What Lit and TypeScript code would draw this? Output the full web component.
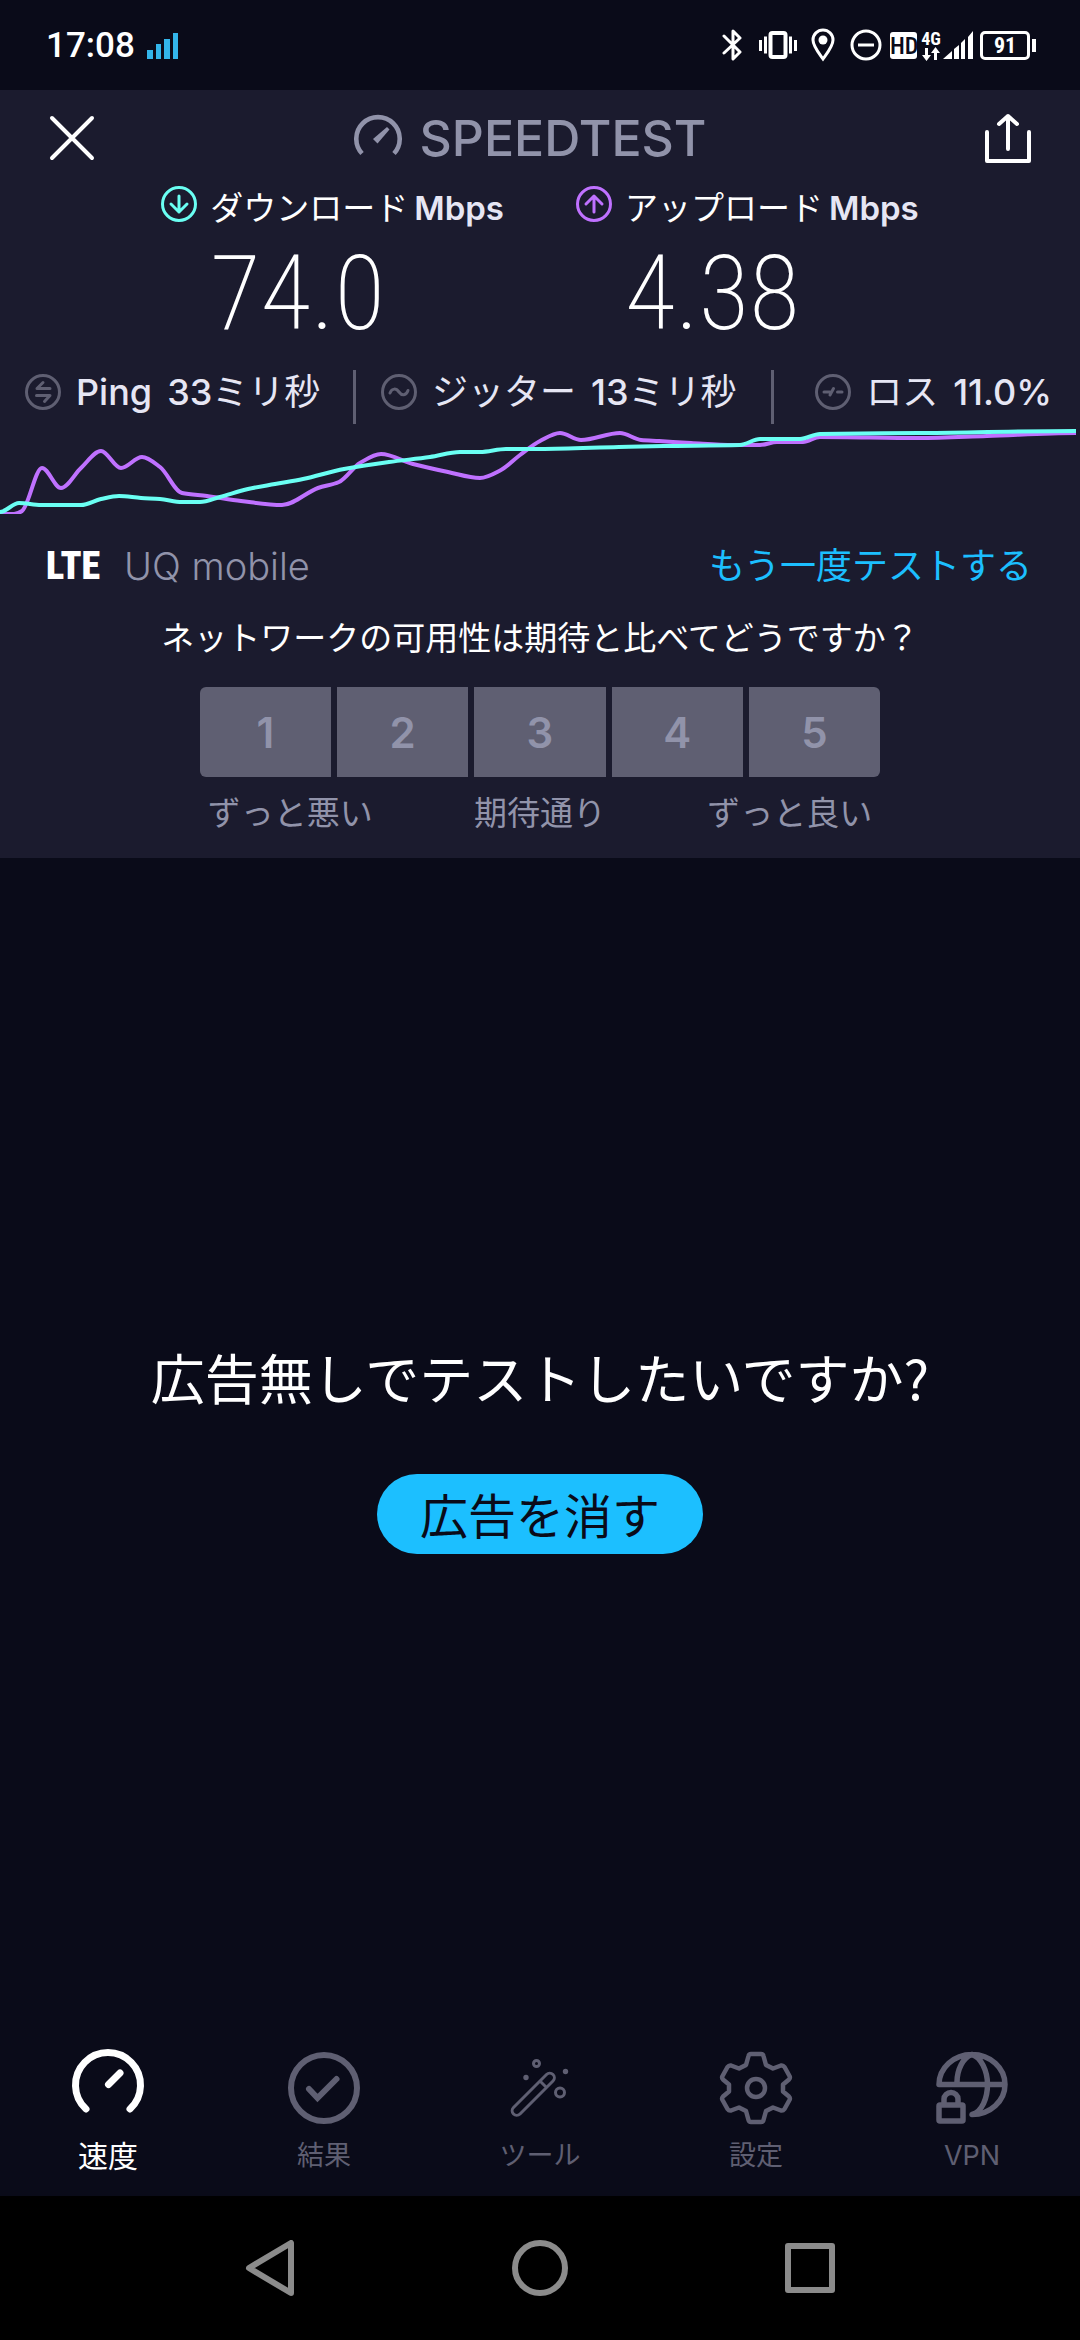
import { LitElement, html, svg, css } from "lit";
import { customElement, property, state } from "lit/decorators.js";
import { classMap } from "lit/directives/class-map.js";

type Point = [number, number];

const downloadSeries: Point[] = [
  [0, 88], [19, 79], [41, 81], [81, 81], [101, 75], [119, 72], [141, 74], [160, 75], [182, 78],
  [200, 78], [220, 73], [248, 65], [275, 60], [303, 55], [344, 45], [389, 38], [430, 33], [460, 28],
  [480, 28], [506, 25], [540, 25], [619, 23], [664, 22], [740, 21], [760, 15], [800, 15], [820, 10],
  [919, 9], [1076, 7],
];

const uploadSeries: Point[] = [
  [0, 90], [14, 90], [22, 87], [42, 44], [61, 64], [81, 44], [101, 27], [121, 44], [142, 33],
  [160, 43], [182, 69], [207, 72], [241, 77], [282, 81], [318, 64], [339, 58], [360, 39], [381, 30],
  [413, 40], [448, 48], [480, 54], [501, 46], [520, 31], [540, 17], [560, 9], [581, 16], [620, 9],
  [641, 16], [659, 17], [691, 19], [733, 21], [760, 21], [777, 18], [803, 18], [820, 13], [919, 14],
  [987, 12], [1076, 9],
];

/** Smooth cubic path through the samples that never overshoots a peak. */
function smoothPath(points: Point[]): string {
  const slopes = points.map((p, i) => {
    if (i === 0 || i === points.length - 1) return 0;
    const [ax, ay] = points[i - 1];
    const [bx, by] = points[i + 1];
    const before = (p[1] - ay) / (p[0] - ax);
    const after = (by - p[1]) / (bx - p[0]);
    return before * after <= 0 ? 0 : (2 * before * after) / (before + after);
  });
  let d = `M${points[0][0]} ${points[0][1]}`;
  for (let i = 1; i < points.length; i++) {
    const [x0, y0] = points[i - 1];
    const [x1, y1] = points[i];
    const h = (x1 - x0) / 3;
    d += ` C${x0 + h} ${y0 + slopes[i - 1] * h} ${x1 - h} ${y1 - slopes[i] * h} ${x1} ${y1}`;
  }
  return d;
}

const latin = css`"Inter", "Noto Sans CJK JP", "Liberation Sans", sans-serif`;
const narrow = css`"Roboto Condensed", "Roboto", "Liberation Sans", sans-serif`;

/* ---------- status bar ---------- */

@customElement("status-bar")
export class StatusBar extends LitElement {
  static styles = css`
    :host {
      display: flex;
      align-items: center;
      justify-content: space-between;
      height: 90px;
      padding: 0 44px 0 46px;
      color: #fff;
      font-family: "Roboto", "Liberation Sans", sans-serif;
    }
    .left { display: flex; align-items: center; gap: 12px; padding-top: 2px; }
    .time { font-size: 35px; line-height: 48px; font-weight: 500; }
    .right { display: flex; align-items: center; }
    .right svg { display: block; }
    .bt { margin-right: 16px; }
    .vib { margin-right: 12px; }
    .pin { margin-right: 14px; }
    .dnd { margin-right: 8px; }
    .hd {
      width: 27px;
      height: 27px;
      margin-right: 4px;
      border-radius: 3px;
      background: #fff;
      color: #0a0b19;
      font-family: ${narrow};
      font-size: 24px;
      line-height: 28px;
      font-weight: 500;
      text-align: center;
    }
    .net { display: flex; flex-direction: column; align-items: center; width: 20px; margin-right: 2px; }
    .gen { font-family: ${narrow}; font-size: 18px; line-height: 17px; font-weight: 700; }
    .sig { margin-right: 6px; }
    .battery {
      box-sizing: border-box;
      width: 50px;
      height: 29px;
      border: 3px solid #fff;
      border-radius: 5px;
      font-family: ${narrow};
      font-size: 22px;
      line-height: 24px;
      font-weight: 700;
      text-align: center;
    }
    .nub { width: 4px; height: 13px; margin-left: 2px; background: #fff; }
  `;

  render() {
    return html`
      <div class="left">
        <span class="time">17:08</span>
        <svg width="32" height="28" viewBox="0 0 32 28" fill="#33b5ea" aria-hidden="true">
          <path d="M0 18h6v9H0zM9 12h5v15H9zM17 7h6v20h-6zM26 1h5v26h-5z" />
        </svg>
      </div>
      <div class="right">
        <svg class="bt" width="20" height="32" viewBox="0 0 20 32" fill="none" stroke="#fff" stroke-width="3" stroke-linejoin="round" stroke-linecap="round" aria-hidden="true">
          <path d="M2 7 18 23 11 30V2l7 7L2 24" />
        </svg>
        <svg class="vib" width="40" height="28" viewBox="0 0 40 28" fill="none" stroke="#fff" stroke-width="3" aria-hidden="true">
          <rect x="12.5" y="2" width="15" height="24" rx="2" stroke-width="4" />
          <path d="M2.5 9v11M7.5 5.5v17M32.5 5.5v17M37.5 9v11" />
        </svg>
        <svg class="pin" width="26" height="34" viewBox="0 0 26 34" fill="none" stroke="#fff" stroke-width="3" aria-hidden="true">
          <path d="M13 31C8 24 3 18 3 12a10 10 0 0 1 20 0c0 6-5 12-10 19z" />
          <circle cx="13" cy="12" r="4.5" fill="#fff" stroke="none" />
        </svg>
        <svg class="dnd" width="32" height="32" viewBox="0 0 32 32" fill="none" stroke="#fff" stroke-width="3" aria-hidden="true">
          <circle cx="16" cy="16" r="14" /><path d="M8 16h16" />
        </svg>
        <span class="hd">HD</span>
        <span class="net">
          <span class="gen">4G</span>
          <svg width="18" height="14" viewBox="0 0 18 14" fill="#fff" aria-hidden="true">
            <path d="M3 1h3v7h3l-4.5 6L0 8h3zM12 13h3V6h3l-4.5-6L9 6h3z" />
          </svg>
        </span>
        <svg class="sig" width="31" height="28" viewBox="0 0 31 28" fill="#fff" aria-hidden="true">
          <path d="M0 28 9 20v8zM11 28V18l5-4v14zM18 28V12l4-4v20zM25 28V6l5-6v28z" />
        </svg>
        <span class="battery">91</span><span class="nub"></span>
      </div>
    `;
  }
}

/* ---------- result panel ---------- */

@customElement("result-panel")
export class ResultPanel extends LitElement {
  @state() private rating = 0;

  static styles = css`
    :host {
      display: flex;
      flex-direction: column;
      padding-bottom: 21px;
      background: #1b1b2e;
      color: #fff;
      font-family: ${latin};
    }
    svg { display: block; flex: none; }
    button { padding: 0; border: 0; background: none; color: inherit; font: inherit; cursor: pointer; }
    .bar { display: flex; align-items: center; justify-content: space-between; height: 96px; padding: 0 48px; }
    .brand { display: flex; align-items: center; gap: 18px; margin: 0; padding-right: 20px; color: #9193aa; font-size: 50px; line-height: 56px; font-weight: 500; }

    .speeds { display: flex; justify-content: center; gap: 72px; }
    .speed { display: grid; grid-template-columns: 36px auto; column-gap: 13px; align-items: start; }
    .name { display: flex; align-items: center; gap: 6px; padding-top: 4px; font-size: 33px; line-height: 36px; white-space: nowrap; }
    .unit { color: #e6e6f4; font-weight: 600; }
    .value { grid-column: 2; font-family: ${narrow}; font-size: 104px; line-height: 136px; font-weight: 200; }

    .metrics { display: grid; grid-template-columns: 353fr 418fr 309fr; margin-top: 8px; color: #e6e6f4; }
    .metric { display: flex; align-items: flex-start; gap: 15px; height: 50px; padding: 4px 0 0 25px; font-size: 36px; line-height: 36px; white-space: nowrap; }
    .metric + .metric { border-left: 3px solid #5f5f72; }
    .metric:last-child { justify-content: flex-end; padding-right: 28px; }
    .strong { font-weight: 500; }
    .chart { width: 100%; height: 90px; }

    .network { display: flex; align-items: center; gap: 24px; margin-top: 28px; padding: 0 48px 0 46px; line-height: 48px; }
    .tech { font-family: ${narrow}; font-size: 38px; font-weight: 900; }
    .carrier { flex: 1; color: #9193aa; font-size: 38px; font-weight: 300; }
    .again { color: #1cbfff; font-size: 36px; text-decoration: none; }

    .survey { display: flex; flex-direction: column; align-items: center; margin-top: 24px; font-size: 33px; line-height: 48px; }
    .question { margin: 0; font-size: 33px; font-weight: 400; }
    .scale { display: grid; grid-template-columns: repeat(5, 1fr); gap: 6px; width: 63%; margin-top: 25px; }
    .score { height: 90px; padding-top: 2px; background: #5f5f72; color: #9193aa; font-size: 42px; font-weight: 600; }
    .score:first-child { border-radius: 6px 0 0 6px; }
    .score:last-child { border-radius: 0 6px 6px 0; }
    .score.chosen { background: #1cbfff; color: #0a0b19; }
    .legend { display: flex; justify-content: space-between; box-sizing: border-box; width: 63%; margin-top: 12px; padding: 0 8px; color: #9193aa; }
  `;

  render() {
    return html`
      <header class="bar">
        <button aria-label="閉じる">
          <svg width="48" height="48" viewBox="0 0 48 48" fill="none" stroke="#fff" stroke-width="4" stroke-linecap="round">
            <path d="M4 4 44 44M44 4 4 44" />
          </svg>
        </button>
        <h1 class="brand">
          <svg width="48" height="48" viewBox="0 0 48 48" aria-hidden="true">
            <path d="M8 39.5a21.7 21.7 0 1 1 32 0" fill="none" stroke="#9193aa" stroke-width="4.6" />
            <path d="M33 13 35.5 15.5 23.5 29.5 19 25z" fill="#9193aa" />
          </svg>
          SPEEDTEST
        </h1>
        <button aria-label="共有">
          <svg width="48" height="50" viewBox="0 0 48 50" fill="none" stroke="#fff" stroke-width="4" stroke-linecap="round" stroke-linejoin="round">
            <path d="M3 19V48H45V19M24 36V3M15 11 24 3 33 11" />
          </svg>
        </button>
      </header>

      <section class="speeds">
        <div class="speed">
          <svg width="36" height="36" viewBox="0 0 36 36" fill="none" stroke="#6afff3" stroke-width="3" stroke-linecap="round" stroke-linejoin="round" aria-hidden="true">
            <circle cx="18" cy="18" r="16.5" /><path d="M18 10V26M10 18 18 26 26 18" />
          </svg>
          <span class="name">ダウンロード<span class="unit">Mbps</span></span>
          <span class="value">74.0</span>
        </div>
        <div class="speed">
          <svg width="36" height="36" viewBox="0 0 36 36" fill="none" stroke="#bf71ff" stroke-width="3" stroke-linecap="round" stroke-linejoin="round" aria-hidden="true">
            <circle cx="18" cy="18" r="16.5" /><path d="M18 26V10M10 18 18 10 26 18" />
          </svg>
          <span class="name">アップロード<span class="unit">Mbps</span></span>
          <span class="value">4.38</span>
        </div>
      </section>

      <section class="metrics">
        <div class="metric">
          <svg width="36" height="36" viewBox="0 0 36 36" fill="none" stroke="#5f5f72" stroke-width="3" stroke-linecap="round" stroke-linejoin="round" aria-hidden="true">
            <circle cx="18" cy="18" r="16.5" /><path d="M25 14.5H12L18 8.5M11.5 21.5H25L19.5 27.5" />
          </svg>
          <span class="strong">Ping</span>
          <span><span class="strong">33</span>ミリ秒</span>
        </div>
        <div class="metric">
          <svg width="36" height="36" viewBox="0 0 36 36" fill="none" stroke="#5f5f72" stroke-width="3" stroke-linecap="round" aria-hidden="true">
            <circle cx="18" cy="18" r="16.5" /><path d="M9 19C11 14 15 14 18 18S25 22 27 16.5" />
          </svg>
          <span>ジッター</span>
          <span><span class="strong">13</span>ミリ秒</span>
        </div>
        <div class="metric">
          <svg width="36" height="36" viewBox="0 0 36 36" fill="none" stroke="#5f5f72" stroke-width="3" stroke-linecap="round" aria-hidden="true">
            <circle cx="18" cy="18" r="16.5" /><path d="M9 18H15M18.5 14.5 15 21M22.5 18H27" />
          </svg>
          <span>ロス</span>
          <span class="strong">11.0%</span>
        </div>
      </section>

      <svg class="chart" viewBox="0 0 1080 90" preserveAspectRatio="none" fill="none" stroke-width="4" role="img" aria-label="速度グラフ">
        ${svg`<path d=${smoothPath(uploadSeries)} stroke="#bf71ff" vector-effect="non-scaling-stroke" />
        <path d=${smoothPath(downloadSeries)} stroke="#6afff3" vector-effect="non-scaling-stroke" />`}
      </svg>

      <section class="network">
        <span class="tech">LTE</span>
        <span class="carrier">UQ mobile</span>
        <a class="again" href="#">もう一度テストする</a>
      </section>

      <section class="survey">
        <h2 class="question">ネットワークの可用性は期待と比べてどうですか？</h2>
        <div class="scale" role="group">
          ${[1, 2, 3, 4, 5].map(
            (n) => html`<button class=${classMap({ score: true, chosen: this.rating === n })} @click=${() => (this.rating = n)}>${n}</button>`
          )}
        </div>
        <div class="legend"><span>ずっと悪い</span><span>期待通り</span><span>ずっと良い</span></div>
      </section>
    `;
  }
}

/* ---------- tab bar ---------- */

const tabs = [
  {
    label: "速度",
    icon: svg`<g stroke-width="7"><path d="M18 61a32.5 32.5 0 1 1 44 0" /><path d="M40.5 36.5 52 25" /></g>`,
  },
  {
    label: "結果",
    icon: svg`<g stroke-width="6"><circle cx="40" cy="40" r="33" /><path d="M25 41 33.5 50 52.5 31" stroke-linejoin="miter" /></g>`,
  },
  {
    label: "ツール",
    icon: svg`<g stroke-width="3"><path d="M13.5 59.5 46.5 26.5a4.5 4.5 0 0 1 6.5 6.5L20 66a4.5 4.5 0 0 1-6.5-6.5zM40 33 46.5 39.5" />
      <circle cx="36.5" cy="15.5" r="3" /><circle cx="60" cy="44.5" r="4.5" /></g>
      <g fill="currentColor" stroke="none"><circle cx="26" cy="29.5" r="2.7" /><circle cx="65.5" cy="23.5" r="2.7" /></g>`,
  },
  {
    label: "設定",
    icon: svg`<g stroke-width="4.5"><path d="M35 6H45Q47 6 47.5 8L50 17 57 20.5 65 17.5Q67 17 68.5 19L73.5 28Q74.5 30 73 31.5L67 36.5V43.5L73 48.5Q74.5 50 73.5 52L68.5 61Q67 63 65 62.5L57 59.5 50 63 47.5 72Q47 74 45 74H35Q33 74 32.5 72L30 63 23 59.5 15 62.5Q13 63 11.5 61L6.5 52Q5.5 50 7 48.5L13 43.5V36.5L7 31.5Q5.5 30 6.5 28L11.5 19Q13 17 15 17.5L23 20.5 30 17 32.5 8Q33 6 35 6z" />
      <circle cx="40" cy="40" r="9" /></g>`,
  },
  {
    label: "VPN",
    icon: svg`<g stroke-width="5.5"><path d="M7 36.500A33 30 0 0 1 73 36.5 33 30 0 0 1 40 66.500C50 64 55.5 50 55.5 36.5S49 9 40 6.500C31 9 25 22 25 34M7 36.500H73" />
      <rect x="7" y="57" width="24" height="16" rx="1" /><path d="M12 56V51a7 6.5 0 0 1 14 0V56" /></g>`,
  },
];

@customElement("tab-bar")
export class TabBar extends LitElement {
  @property({ type: Number }) active = 0;

  static styles = css`
    :host { display: block; font-family: ${latin}; }
    .tabs { display: grid; grid-template-columns: repeat(5, 1fr); padding: 13px 0 12px; }
    .tab { display: flex; flex-direction: column; align-items: center; color: #5f5f72; font-size: 27px; line-height: 56px; font-weight: 400; text-decoration: none; }
    .tab.active { color: #fff; font-size: 30px; }
    svg { display: block; }
  `;

  render() {
    return html`
      <nav class="tabs">
        ${tabs.map(
          (tab, i) => html`
            <a href="#" class=${classMap({ tab: true, active: i === this.active })}>
              <svg width="80" height="80" viewBox="0 0 80 80" fill="none" stroke="currentColor" stroke-linecap="round" stroke-linejoin="round" aria-hidden="true">${tab.icon}</svg>
              <span>${tab.label}</span>
            </a>
          `
        )}
      </nav>
    `;
  }
}

/* ---------- app ---------- */

@customElement("app-root")
export class AppRoot extends LitElement {
  static styles = css`
    :host {
      display: flex;
      flex-direction: column;
      min-height: 100vh;
      background: #0a0b19;
      color: #fff;
      font-family: "Noto Sans CJK JP", sans-serif;
    }
    .promo { flex: 1; display: flex; flex-direction: column; align-items: center; justify-content: center; gap: 59px; }
    .pitch { margin: 0; font-size: 54px; line-height: 76px; font-weight: 400; }
    .remove {
      height: 80px;
      padding: 0 43px 2px;
      border: 0;
      border-radius: 40px;
      background: #1cbfff;
      color: #0a0b19;
      font-family: inherit;
      font-size: 48px;
      line-height: 78px;
      cursor: pointer;
    }
    .system { display: grid; grid-template-columns: repeat(3, 1fr); height: 144px; padding: 0 12.5%; background: #000; }
    .key { display: flex; align-items: center; justify-content: center; padding: 0; border: 0; background: none; cursor: pointer; }
  `;

  render() {
    return html`
      <status-bar></status-bar>
      <result-panel></result-panel>
      <main class="promo">
        <h2 class="pitch">広告無しでテストしたいですか?</h2>
        <button class="remove">広告を消す</button>
      </main>
      <tab-bar></tab-bar>
      <nav class="system">
        <button class="key" aria-label="戻る">
          <svg width="56" height="56" viewBox="0 0 56 56" fill="none" stroke="#8b8b8b" stroke-width="6" stroke-linejoin="round"><path d="M49 3V53L7 28z" /></svg>
        </button>
        <button class="key" aria-label="ホーム">
          <svg width="56" height="56" viewBox="0 0 56 56" fill="none" stroke="#8b8b8b" stroke-width="6"><circle cx="28" cy="28" r="25" /></svg>
        </button>
        <button class="key" aria-label="履歴">
          <svg width="56" height="56" viewBox="0 0 56 56" fill="none" stroke="#8b8b8b" stroke-width="6" stroke-linejoin="round"><rect x="6" y="6" width="44" height="44" /></svg>
        </button>
      </nav>
    `;
  }
}
